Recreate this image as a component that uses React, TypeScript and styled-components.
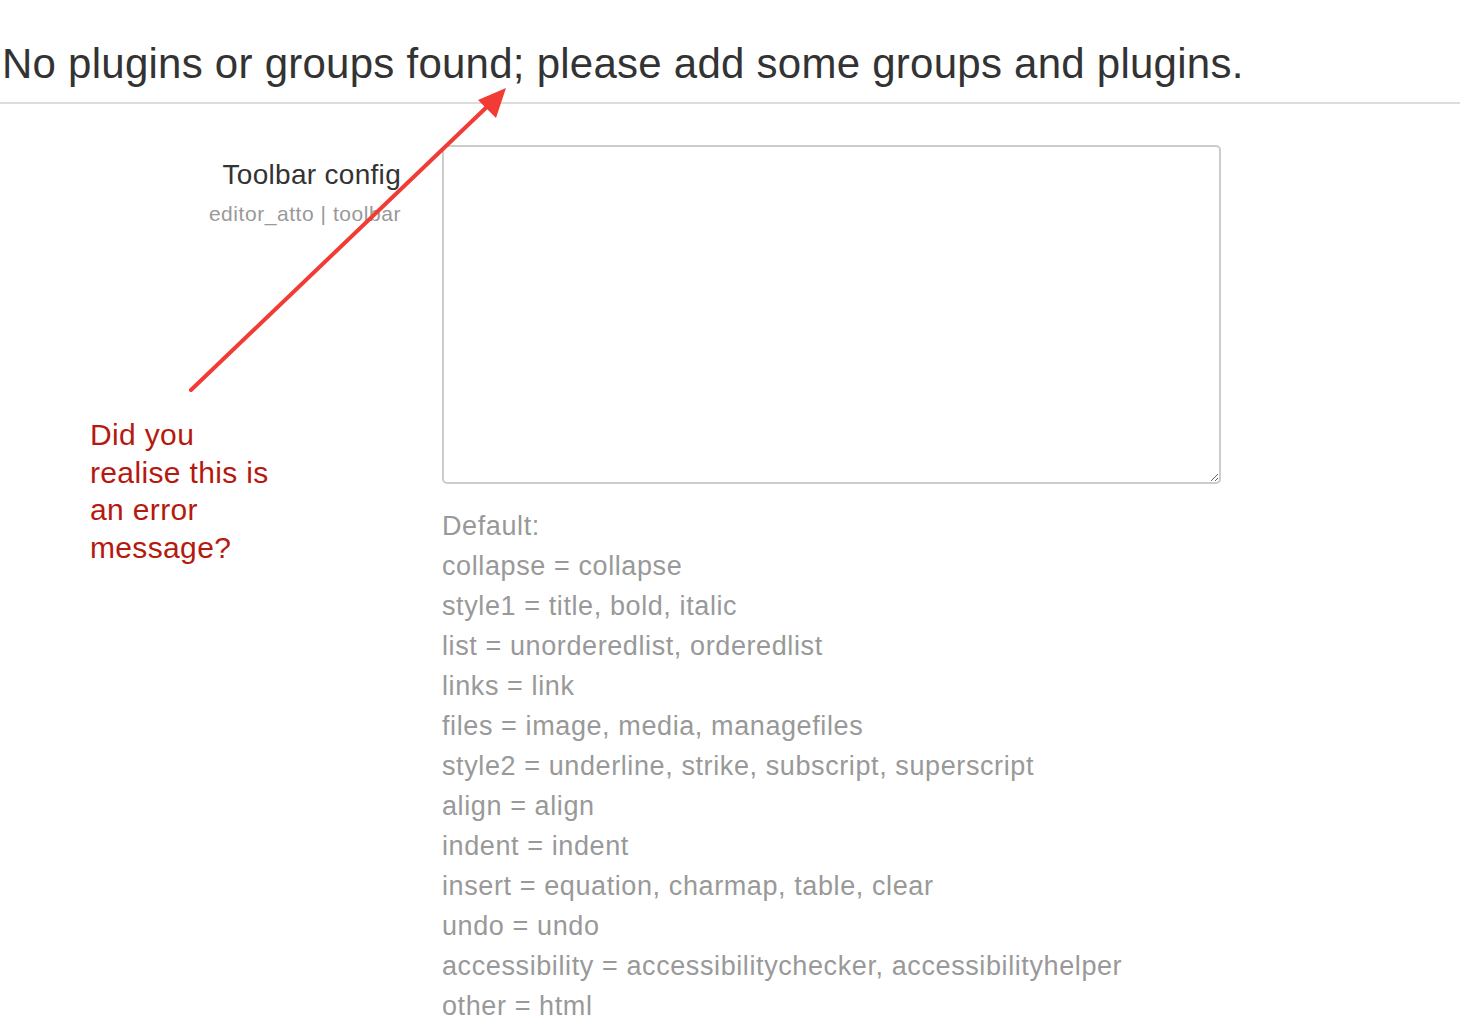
import React from 'react';
import styled, { createGlobalStyle } from 'styled-components';

const GlobalStyle = createGlobalStyle`
  body {
    margin: 0;
    background: #fff;
    font-family: "Liberation Sans", Arial, sans-serif;
    color: #333;
  }
`;

const defaults = [
  'collapse = collapse',
  'style1 = title, bold, italic',
  'list = unorderedlist, orderedlist',
  'links = link',
  'files = image, media, managefiles',
  'style2 = underline, strike, subscript, superscript',
  'align = align',
  'indent = indent',
  'insert = equation, charmap, table, clear',
  'undo = undo',
  'accessibility = accessibilitychecker, accessibilityhelper',
  'other = html',
];

const App = () => {
  return (
    <Page>
      <GlobalStyle />
      <Heading>No plugins or groups found; please add some groups and plugins.</Heading>
      <Row>
        <LabelCol>
          <Label>Toolbar config</Label>
          <SubLabel>editor_atto | toolbar</SubLabel>
        </LabelCol>
        <FieldCol>
          <TextArea />
          <Defaults>
            <div>Default:</div>
            {defaults.map((line) => (
              <div key={line}>{line}</div>
            ))}
          </Defaults>
        </FieldCol>
      </Row>

      {/* annotation laid over the screenshot */}
      <Note>
        Did you<br />
        realise this is<br />
        an error<br />
        message?
      </Note>
      <Arrow width="1460" height="1026" viewBox="0 0 1460 1026">
        <line x1="191" y1="390" x2="492" y2="102" stroke="#f23b35" strokeWidth="4" strokeLinecap="round" />
        <polygon points="506,88 478,100 496,118" fill="#f23b35" />
      </Arrow>
    </Page>
  );
};

export default App;

const Page = styled.div`
  position: relative;
  width: 1460px;
  height: 1026px;
  overflow: hidden;
`;

const Heading = styled.h1`
  margin: 0;
  padding: 39px 0 13px 2px;
  font-size: 42px;
  letter-spacing: 0.25px;
  font-weight: normal;
  line-height: 50px;
  color: #333;
  border-bottom: 2px solid #ddd;
`;

const Row = styled.div`
  display: flex;
  margin-top: 41px;
`;

const LabelCol = styled.div`
  width: 401px;
  flex-shrink: 0;
  text-align: right;
  padding-top: 13px;
`;

const Label = styled.div`
  font-size: 28px;
  letter-spacing: 0.3px;
  line-height: 34px;
  color: #333;
`;

const SubLabel = styled.div`
  margin-top: 7px;
  font-size: 21px;
  letter-spacing: 0.55px;
  line-height: 30px;
  color: #999;
`;

const FieldCol = styled.div`
  margin-left: 41px;
  display: flex;
  flex-direction: column;
`;

const TextArea = styled.textarea`
  box-sizing: border-box;
  width: 779px;
  height: 339px;
  border: 2px solid #ccc;
  border-radius: 5px;
  background: #fff;
  resize: both;
  font-family: inherit;
`;

const Defaults = styled.div`
  margin-top: 22px;
  font-size: 27px;
  letter-spacing: 0.6px;
  line-height: 40px;
  color: #999;
`;

const Note = styled.div`
  position: absolute;
  left: 90px;
  top: 416px;
  font-size: 30px;
  letter-spacing: 0.35px;
  line-height: 37.5px;
  color: #b5190f;
`;

const Arrow = styled.svg`
  position: absolute;
  left: 0;
  top: 0;
  pointer-events: none;
`;
